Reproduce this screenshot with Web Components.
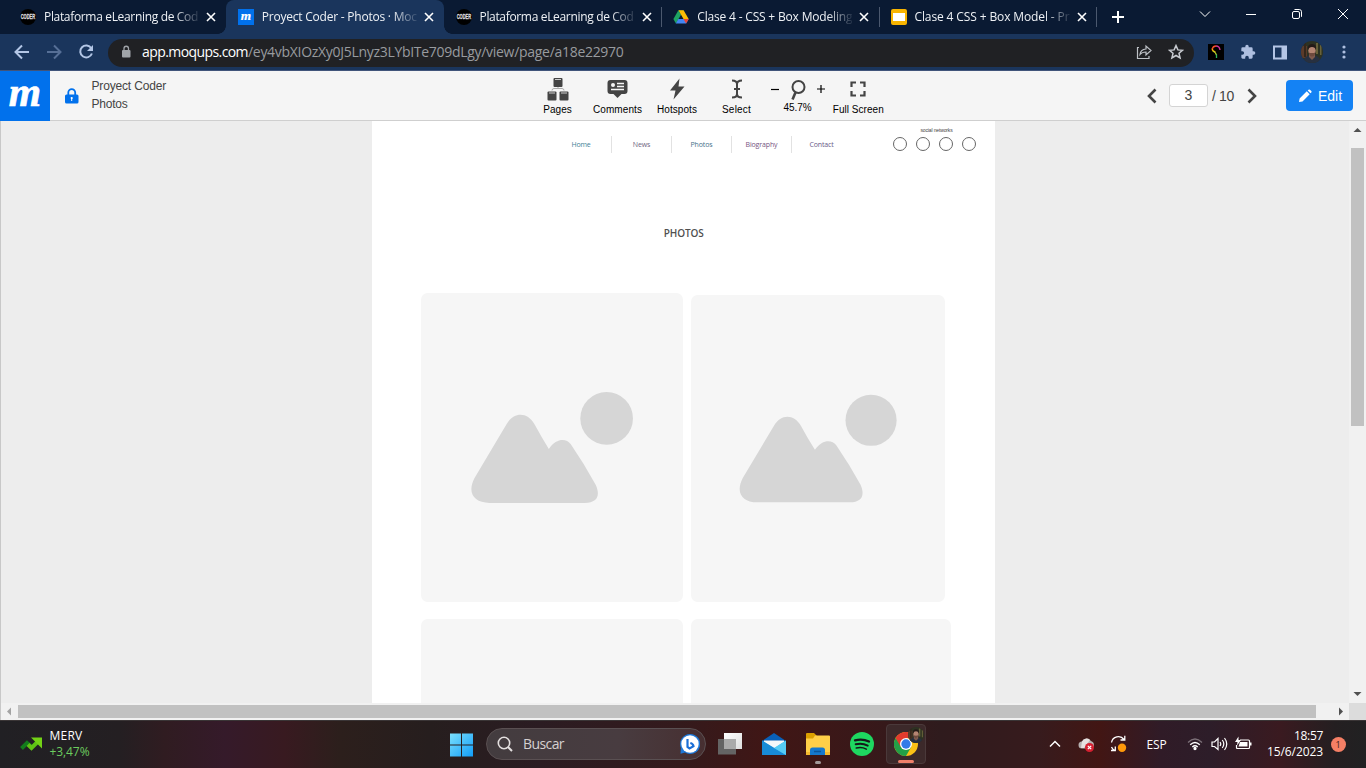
<!DOCTYPE html>
<html lang="es">
<head>
<meta charset="utf-8">
<title>Proyect Coder - Photos · Moqups</title>
<style>
html,body{margin:0;height:100%;overflow:hidden}
body{display:flex;flex-direction:column;height:768px;width:1366px;background:#ededed;font-family:"Open Sans","Noto Sans",sans-serif}
</style>
</head>
<body>
<browser-tabs></browser-tabs>
<browser-bar></browser-bar>
<app-header></app-header>
<scroll-view><mock-page></mock-page></scroll-view>
<task-bar></task-bar>
<script>
const define=(name,html)=>customElements.define(name,class extends HTMLElement{
  constructor(){super();const t=document.createElement('template');
    t.innerHTML=html;
    this.attachShadow({mode:'open'}).append(t.content.cloneNode(true));}
});

/* Label whose tracking is adjusted to occupy the width in its "w" attribute */
customElements.define('ui-label',class extends HTMLElement{
  constructor(){super();this.attachShadow({mode:'open'}).innerHTML=
    '<style>:host{display:inline-block;white-space:pre;flex:none}span{display:inline-block}</style><span><slot></slot></span>';}
  connectedCallback(){
    const w=parseFloat(this.getAttribute('w'));if(!w)return;
    const s=this.shadowRoot.querySelector('span'),n=this.textContent.length;
    s.style.letterSpacing=(w-s.getBoundingClientRect().width)/n+'px';
  }
});

define('m-logo',`<style>:host{display:flex;flex:none;background:#0171ec}svg{width:100%;height:100%;overflow:visible}</style>
<svg viewBox="0 0 50 50"><text x="25" y="35" text-anchor="middle" font-family="Liberation Serif" font-size="41.500" font-weight="bold" font-style="italic" fill="#fff" stroke="#fff" stroke-width=".7">m</text></svg>`);

define('coder-icon',`<style>:host{display:flex;flex:none;width:16px;height:16px}svg{overflow:visible}</style>
<svg width="16" height="16"><circle cx="8" cy="8" r="8" fill="#000"/><text x="0.700" y="10.300" textLength="14.500" lengthAdjust="spacingAndGlyphs" font-family="Liberation Sans" font-weight="bold" font-size="7" fill="#ddd" stroke="#ddd" stroke-width=".3">CODER</text></svg>`);

define('drive-icon',`<style>:host{display:flex;flex:none}</style>
<svg width="16" height="16" viewBox="0 0 16 16"><path d="M5.4 1.2h5.2L8 5.7z" fill="#188038"/><path d="M5.4 1.2 8 5.7 2.9 14.5.4 10z" fill="#1ea362"/><path d="M10.6 1.2 15.7 10h-5.2L5.5 1.3z" fill="#fbbc04"/><path d="M5.3 10h10.4l-2.6 4.5H2.8z" fill="#4285f4"/><path d="M10.5 10h5.2l-2.6 4.5z" fill="#ea4335"/></svg>`);

define('slides-icon',`<style>:host{display:block;flex:none;box-sizing:border-box;width:16px;height:16px;border-radius:2px;background:#fff;border:solid #f8b400;border-width:4px 2px}</style>`);

define('photo-avatar',`<style>:host{display:flex;flex:none;width:22px;height:22px}svg{width:100%;height:100%;border-radius:50%}</style>
<svg viewBox="0 0 22 22"><rect width="22" height="22" fill="#2d3222"/><path d="M0 5h6v12H0z" fill="#5b3b2a"/><path d="M3 2h2v14H3z" fill="#33271c"/><path d="M15 2h2v11h-2zM19 4h1.500v10H19z" fill="#68623a"/><path d="M2 22q1-7 7-8h4q6 1 7 8z" fill="#273040"/><path d="M8 12h6v4l-3 3-3-3z" fill="#7f5a4d"/><ellipse cx="11" cy="9.500" rx="3.700" ry="5" fill="#b58572"/><path d="M7 9q-1-6 4-6t4 6q-1-3-4-3t-4 3z" fill="#241a17"/><path d="M7.700 11.500q3.300 1 6.600 0-.5 4-3.300 4t-3.300-4z" fill="#6e4a3e"/></svg>`);

define('browser-tab',`<style>
:host{display:flex;align-items:center;position:relative;box-sizing:border-box;width:217.75px;height:34px;padding-left:12px;color:#eef1f5;flex:none;font-size:12px}
:host([active]){background:#1a355c;border-radius:8px 8px 0 0}
:host([active])::before,:host([active])::after{content:"";position:absolute;bottom:0;width:8px;height:8px}
:host([active])::before{left:-8px;background:radial-gradient(circle at 0 0,transparent 7.5px,#1a355c 8px)}
:host([active])::after{right:-8px;background:radial-gradient(circle at 100% 0,transparent 7.5px,#1a355c 8px)}
:host([line])::after{content:"";position:absolute;right:-1px;top:7px;width:1px;height:20px;background:#4b586e}
.t{margin-left:8px;width:155px;line-height:18px;-webkit-mask-image:linear-gradient(90deg,#000 84%,rgba(0,0,0,.1) 100%);mask-image:linear-gradient(90deg,#000 84%,rgba(0,0,0,.1) 100%)}
svg{margin-left:7px}</style>
<slot name="icon"></slot><div class="t"><slot></slot></div>
<svg width="10" height="10"><path d="M1 1 9 9M9 1 1 9" stroke="#fff" stroke-width="1.6"/></svg>`);

define('browser-tabs',`<style>
:host{display:flex;height:34px;background:#0a1a33;padding-left:8px;flex:none;position:relative}
m-logo{width:16px;height:16px}
.plus{margin:10px 0 0 15px}.win{margin-left:auto;display:flex;gap:32px;align-items:center;height:28px;padding-right:16px}
</style>
<browser-tab><coder-icon slot="icon"></coder-icon><ui-label w="154">Plataforma eLearning de Cod</ui-label></browser-tab>
<browser-tab active><m-logo slot="icon"></m-logo><ui-label w="155">Proyect Coder - Photos · Moc</ui-label></browser-tab>
<browser-tab line><coder-icon slot="icon"></coder-icon><ui-label w="154">Plataforma eLearning de Cod</ui-label></browser-tab>
<browser-tab line><drive-icon slot="icon"></drive-icon><ui-label w="155">Clase 4 - CSS + Box Modeling</ui-label></browser-tab>
<browser-tab line style="width:216.750px;padding-left:11.500px"><slides-icon slot="icon"></slides-icon><ui-label w="155">Clase 4 CSS + Box Model - Pr</ui-label></browser-tab>
<svg class="plus" width="14" height="14"><path d="M7 1v12M1 7h12" stroke="#fff" stroke-width="2"/></svg>
<div class="win">
<svg width="14" height="14" fill="none" stroke="#fff"><path d="m2 4.5 5 5 5-5"/></svg>
<svg width="14" height="14" fill="none" stroke="#fff"><path d="M2 7.5h10"/></svg>
<svg width="14" height="14" fill="none" stroke="#fff"><rect x="2.5" y="4.5" width="7" height="7" rx="1.5"/><path d="M4.5 2.5h4.7q2.3 0 2.3 2.3v5"/></svg>
<svg width="14" height="14" fill="none" stroke="#fff"><path d="m2 2 10 10M12 2 2 12"/></svg>
</div>`);

define('browser-bar',`<style>
:host{display:flex;align-items:center;box-sizing:border-box;height:37px;background:#1a355c;border-bottom:1px solid #41547a;flex:none;padding:0 17px 0 13px}
svg{display:block;flex:none}
.nav{display:flex;gap:14px;width:95px}
.url{display:flex;align-items:center;width:1086px;flex:none;height:28px;border-radius:14px;background:#202124;font-size:14px;line-height:20px;color:#989b9f;box-sizing:border-box;padding:0 10px 1px 12px;margin-top:1px}
.url b{font-weight:400;color:#fff;margin-left:10px;display:flex}
.act{margin-left:auto;display:flex;gap:15px}
.ext{display:flex;align-items:center;margin-left:14px}
</style>
<div class="nav">
<svg width="18" height="18" viewBox="0 0 18 18" fill="none" stroke="#b3c6e6" stroke-width="2"><path d="M16 9H3M9 2.500 2.500 9 9 15.500"/></svg>
<svg width="18" height="18" viewBox="0 0 18 18" fill="none" stroke="#566f96" stroke-width="2"><path d="M2 9h13M9 2.500 15.500 9 9 15.500"/></svg>
<svg width="18" height="18" viewBox="0 0 18 18" fill="none" stroke="#b3c6e6" stroke-width="2"><path d="M14.300 5.200A6 6 0 1 0 14.900 10.500"/><path d="M16 2v6h-6z" fill="#b3c6e6" stroke="none"/></svg></div>
<div class="url"><svg width="12" height="14" fill="#a0a4a9"><rect x="2" y="5" width="8.500" height="7.500" rx="1"/><path d="M4 5V3.500a2.250 2.250 0 0 1 4.500 0V5" fill="none" stroke="#a0a4a9" stroke-width="1.300"/></svg>
<b><ui-label w="106">app.moqups.com</ui-label></b><ui-label w="375.500">/ey4vbXIOzXy0J5Lnyz3LYbITe709dLgy/view/page/a18e22970</ui-label>
<div class="act"><svg width="17" height="16" fill="none" stroke="#bdc1c6" stroke-width="1.200"><path d="M3 3.500H1.500v11H13V12M4 10.500Q4.500 5.500 10 5V2l5 4.500L10 11V8Q6 8 4 10.500z"/></svg>
<svg width="16" height="16" fill="none" stroke="#c8cbd0" stroke-width="1.500"><path d="m8 1.600 1.900 4.300 4.600.4-3.500 3 1.100 4.700L8 11.500l-4.100 2.500L5 9.300 1.500 6.300l4.600-.4z"/></svg></div></div>
<div class="ext">
<svg width="16" height="16"><rect width="16" height="16" fill="#000"/><g fill="none" stroke-width="1.300"><path d="M7.500 8Q4 7 4.200 4.500" stroke="#ffb300"/><path d="M4.200 5Q5 2 8 2" stroke="#f4502c"/><path d="M8 2q3.500 0 4 4" stroke="#d2349c"/><path d="M4.800 7Q8 8.500 8.500 11" stroke="#b7d12c"/><path d="M8.500 10.500V14" stroke="#2bbb62"/></g></svg>
<svg width="16" height="16" viewBox="0 0 24 24" style="margin-left:16px" fill="#aebfe0"><path d="M20.500 11H19V7a2 2 0 0 0-2-2h-4V3.500a2.500 2.500 0 0 0-5 0V5H4a2 2 0 0 0-2 2v3.800h1.500a2.700 2.700 0 0 1 0 5.400H2V20c0 1.100.9 2 2 2h3.800v-1.500a2.700 2.700 0 0 1 5.400 0V22H17a2 2 0 0 0 2-2v-4h1.500a2.500 2.500 0 0 0 0-5z"/></svg>
<svg width="15" height="15" style="margin-left:17px"><path fill="#b4c5e5" fill-rule="evenodd" d="M0 .500h14v14H0zM2 2.500v10h6.500v-10z"/></svg>
<photo-avatar style="margin-left:13px"></photo-avatar>
<svg width="8" height="16" style="margin-left:17px" fill="#aebfe0"><circle cx="4" cy="3" r="1.600"/><circle cx="4" cy="8" r="1.600"/><circle cx="4" cy="13" r="1.600"/></svg>
</div>`);

define('tool-item',`<style>:host{display:flex;flex-direction:column;align-items:center;font:10px/12px "Liberation Sans",Arial,sans-serif;color:#000}
.i{height:26px;display:flex;align-items:center;margin-bottom:1px}</style><div class="i"><slot name="icon"></slot></div><slot></slot>`);

define('app-header',`<style>
:host{display:flex;align-items:center;box-sizing:border-box;height:50px;background:#f5f5f5;border-bottom:1px solid #cfcfcf;flex:none;font-family:"Liberation Sans",Arial,sans-serif;position:relative;z-index:1}
m-logo{width:50px;height:50px;align-self:flex-start}
.lock{margin:0 12.500px 0 15px}
.names{font-size:12px;line-height:18px;color:#444;width:436px;flex:none;padding-bottom:1px}.names div{height:18px}
.tools{display:grid;grid-template-columns:repeat(6,60px);padding-top:2px;width:360px}
svg{display:block}.z{display:flex;gap:8px;align-items:center}
.pager{display:flex;align-items:center;margin-left:auto;font-size:14px;color:#444}
.box{box-sizing:border-box;width:39px;height:23px;border:1px solid #d4d4d4;border-radius:3px;background:#fff;text-align:center;line-height:21px;margin:0 4px 0 12px}
.edit{display:flex;align-items:center;box-sizing:border-box;width:67px;height:31px;border-radius:4px;background:#1482f4;color:#fff;margin:0 13px 0 29.500px;padding-left:12px;gap:6px;font-size:14px}
</style>
<m-logo></m-logo>
<svg class="lock" width="14" height="16"><rect y="6.500" width="13.500" height="9" rx="1.500" fill="#0171ec"/><path d="M3.300 7V4.500a3.400 3.400 0 0 1 6.900 0V7" fill="none" stroke="#0171ec" stroke-width="1.800"/><circle cx="6.700" cy="10" r="1.100" fill="#fff"/><path d="M6.200 10h1v3h-1z" fill="#fff"/></svg>
<div class="names"><div><ui-label w="74.500">Proyect Coder</ui-label></div><div><ui-label w="36">Photos</ui-label></div></div>
<div class="tools">
<tool-item><svg slot="icon" width="22" height="24" style="margin-top:-2px" fill="#444"><rect x="6.500" y="1" width="9" height="9" rx="1"/><rect x=".5" y="14.500" width="9" height="9" rx="1"/><rect x="12.500" y="14.500" width="9" height="9" rx="1"/><path d="M8 2.500h6M2 16h6M14 16h6" stroke="#ccc"/><path d="M5 13.500q0-2 2-2h8q2 0 2 2M11 10v1.500" fill="none" stroke="#aaa"/></svg><ui-label w="28.500">Pages</ui-label></tool-item>
<tool-item><svg slot="icon" width="22" height="22" style="margin-top:-2px" fill="#444"><path d="M3.500 2h14q3 0 3 3v8q0 3-3 3h-3L10.500 20 6.500 16h-3q-3 0-3-3V5q0-3 3-3z"/><circle cx="6" cy="7" r="2" fill="#f5f5f5"/><path d="M10 5.500h7M10 8.500h7M4 11.500h13" stroke="#f5f5f5" stroke-width="1.300"/></svg><ui-label w="49">Comments</ui-label></tool-item>
<tool-item><svg slot="icon" width="16" height="22" style="margin:-2px 2px 0 0" fill="#444"><path d="M10.500.5 1 12.500h5.500L4.500 21.500 15.500 8.500H9.500z"/></svg><ui-label w="40" style="margin-right:1px">Hotspots</ui-label></tool-item>
<tool-item><svg slot="icon" width="14" height="20" style="margin:-2px 2px 0 0" fill="none" stroke="#444" stroke-width="2"><path d="M2 1.500q5 0 5 3.500v10q0 3.500-5 3.500M12 1.500q-5 0-5 3.500v10q0 3.500 5 3.500M4 10h6"/></svg><ui-label w="29" style="margin-right:2px">Select</ui-label></tool-item>
<tool-item style="margin-top:-1px"><div slot="icon" class="z"><svg width="9" height="8"><path d="M0 4.500h8" stroke="#000" stroke-width="1.200"/></svg><svg width="20" height="22" fill="none" stroke="#444"><circle cx="10.500" cy="9" r="6" stroke-width="2"/><path d="M7.500 14.500 4.500 21.500" stroke-width="2.600"/></svg><svg width="9" height="8"><path d="M1 4h8M5 0v8" stroke="#000" stroke-width="1.200"/></svg></div><ui-label w="28" style="margin-top:-1px">45.7%</ui-label></tool-item>
<tool-item><svg slot="icon" width="16" height="16" style="margin:-2px 0 0 1px" fill="none" stroke="#444" stroke-width="2.200"><path d="M1.500 6V1.500H6M10 1.500h4.500V6M14.500 10v4.500H10M6 14.500H1.500V10"/></svg><ui-label w="51" style="margin-left:1.500px">Full Screen</ui-label></tool-item>
</div>
<div class="pager"><svg width="10" height="16" fill="none" stroke="#444" stroke-width="2.600"><path d="M8.500 1.500 2 8l6.500 6.500"/></svg><div class="box"><span>3</span></div><ui-label w="22">/ 10</ui-label><svg style="margin-left:12.500px" width="10" height="16" fill="none" stroke="#444" stroke-width="2.600"><path d="M1.500 1.500 8 8l-6.500 6.500"/></svg>
<div class="edit"><svg width="14" height="14" fill="#fff"><path d="M1 13l.6-3.500L8.800 2.300l2.900 2.900-7.200 7.200zM9.700 1.500l.8-.8q.7-.6 1.400 0l1.400 1.400q.7.700 0 1.400l-.8.800z"/></svg><ui-label w="24">Edit</ui-label></div></div>`);

define('scroll-view',`<style>
:host{display:grid;grid-template:582px 17px/1349px 17px;flex:none;height:599px;box-sizing:border-box}
.c{background:#ededed;border-left:1px solid #c8c8c8;box-sizing:border-box;overflow:hidden;padding-left:371px}
.v{background:#f1f1f1;display:flex;flex-direction:column;align-items:center;justify-content:space-between}
.vt{width:13px;height:278px;background:#c1c1c1;margin-bottom:251px}
.h{background:#f1f1f1;display:flex;align-items:center;border-left:1px solid #c8c8c8;box-sizing:border-box}
.ht{height:13px;width:1298px;background:#c1c1c1}
.k{background:#dcdcdc}svg{display:block;flex:none}
</style><div class="c"><slot></slot></div>
<div class="v"><svg width="17" height="17"><path d="M4.500 11 8.500 7l4 4z" fill="#505050"/></svg><div class="vt"></div><svg width="17" height="17"><path d="M4.500 6 8.500 10l4-4z" fill="#505050"/></svg></div>
<div class="h"><svg width="17" height="17"><path d="M10 4.500 6 8.500l4 4z" fill="#a3a3a3"/></svg><div class="ht"></div><svg width="17" height="17" style="margin-left:auto"><path d="M7 4.500 11 8.500l-4 4z" fill="#505050"/></svg></div><div class="k"></div>`);

define('photo-card',`<style>:host{display:block;background:#f6f6f6;border-radius:6.500px;flex:none}svg{display:block;width:100%;height:100%}:host([blank]) svg{display:none}</style>
<svg viewBox="35 39 785 926" fill="#d6d6d6"><circle cx="591.500" cy="415.500" r="79"/><path d="M418 507Q395 470 375 433C353 395 313 395 291 433L195 594C172 638 192 669 240 669H526C564 669 573 647 559 615Q525 553 484 493C470 475 441 474 418 507z"/></svg>`);

define('mock-page',`<style>
:host{display:block;width:623px;height:582px;background:#fff;overflow:hidden;box-sizing:border-box}
.top{display:flex;height:47px;padding-left:179px}
nav{display:grid;grid-template-columns:repeat(5,60px);height:16px;margin-top:15px;font-size:7px;line-height:17px;text-align:center}
nav div+div{border-left:1px solid #e2e2e2}
.soc{margin:6px 0 0 41px;width:84px;display:flex;flex-direction:column;align-items:center;font:5px/6px "Liberation Sans",sans-serif;color:#444}
.dots{display:flex;gap:9px;margin-top:4px}.dots i{box-sizing:border-box;width:14px;height:14px;border:1px solid #666;border-radius:50%}
h1{margin:58px 0 0;text-align:center;font-size:10px;line-height:14px;font-weight:600;color:#505050;height:14px;padding-left:.5px}
.row{display:flex;gap:8px;align-items:flex-end;margin:53px 0 0 49.400px}
.row+.row{margin-top:17px;align-items:flex-start}
</style>
<div class="top"><nav><div><ui-label w="19" style="color:#3f7f97">Home</ui-label></div><div><ui-label w="17.500" style="color:#6f6480">News</ui-label></div><div><ui-label w="22" style="color:#45718a">Photos</ui-label></div><div><ui-label w="32" style="color:#76547f">Biography</ui-label></div><div><ui-label w="24" style="color:#695a87">Contact</ui-label></div></nav>
<div class="soc"><ui-label w="32" style="margin-left:5px">social networks</ui-label><div class="dots"><i></i><i></i><i></i><i></i></div></div></div>
<h1><ui-label w="40">PHOTOS</ui-label></h1>
<div class="row"><photo-card style="width:262px;height:308.500px"></photo-card><photo-card style="width:254px;height:306.500px"></photo-card></div>
<div class="row"><photo-card blank style="width:262px;height:308px"></photo-card><photo-card blank style="width:260px;height:308px"></photo-card></div>`);

define('task-bar',`<style>
:host{display:flex;align-items:center;box-sizing:border-box;height:48px;flex:none;border-top:1px solid #3a3536;color:#fff;font-size:12px;
background:linear-gradient(90deg,#212024 0,#241f22 120px,#301c21 165px,#351a2a 225px,#381a20 285px,#2c1f1c 340px,#261e1e 430px,#2b1c22 540px,#341a1c 680px,#401615 770px,#391819 860px,#2f1b1d 940px,#371b1d 1040px,#421614 1100px,#301b27 1160px,#2d1d29 1210px,#3a1a20 1280px,#241f21 1335px,#212122 1366px)}
svg{display:block;flex:none}
.w{display:flex;align-items:center;gap:7.500px;padding:0 0 1px 20px;width:430px;box-sizing:border-box;line-height:16px}.w div div{height:16px}
.up{color:#6ccb5f}
.s{display:flex;align-items:center;box-sizing:border-box;width:220px;height:32px;border-radius:16px;border:1px solid #5a5052;background:linear-gradient(90deg,#433c3f,#483c40 60%,#472f31);margin:-1px 12px 0 12px;padding:0 5px 1px 10px;color:#d5d0d1;font-size:14px;line-height:20px}
.s ui-label{margin-left:10px}.s svg:last-child{margin-left:auto}
.apps{display:flex;gap:20px;align-items:center}.app{position:relative}
.app.r::after{content:"";position:absolute;left:9px;bottom:-7px;width:6px;height:3px;border-radius:2px;background:#a39a9a}
.chrome{display:flex;align-items:center;justify-content:center;position:relative;width:40px;height:40px;box-sizing:border-box;border:1px solid #4a393a;border-radius:4px;background:#3c292a;margin-left:12px;margin-top:-1px}
.chrome photo-avatar{position:absolute;right:1px;top:2px;width:16px;height:16px}
.chrome::after{content:"";position:absolute;left:11px;bottom:0;width:16px;height:3px;border-radius:2px;background:#f0806a}
.tray{margin-left:auto;display:flex;align-items:center;padding:0 20.500px 1px 0}
.clock{text-align:right;line-height:16px;width:58px;margin-left:13.500px}.clock div{height:16px;display:flex;justify-content:flex-end}
.n{width:15px;height:15px;border-radius:50%;background:#f57f65;color:#3b1a18;font-size:9px;line-height:15px;text-align:center;margin-left:7.500px}
</style>
<div class="w"><svg width="22" height="16"><path d="M1.500 12.500 7 7l4 3.500" fill="none" stroke="#137c1c" stroke-width="4"/><path d="M8 8.500 11.500 12 19 4.500" fill="none" stroke="#5fc315" stroke-width="4"/><path d="M11 1.500h11v11z" fill="#73d216"/></svg><div><div><ui-label w="33">MERV</ui-label></div><div class="up"><ui-label w="40">+3,47%</ui-label></div></div></div>
<svg width="24" height="24" style="margin-left:19px;margin-right:1px"><defs><linearGradient id="g" x2="1" y2="1" gradientUnits="userSpaceOnUse" gradientTransform="scale(24)"><stop stop-color="#7fe2fc"/><stop offset="1" stop-color="#109cf8"/></linearGradient></defs><path d="M1 .5h11v11H1zM13 .5h11v11H13zM1 12.500h11v11H1zM13 12.500h11v11H13z" fill="url(#g)"/></svg>
<div class="s"><svg width="16" height="16" fill="none" stroke="#e4e0e0"><circle cx="7" cy="7" r="5.700" stroke-width="1.600"/><path d="m11 11 4 4" stroke-width="2"/></svg><ui-label w="41">Buscar</ui-label>
<svg width="20" height="20"><path d="M10 0a10 10 0 1 1-5 18.500L.5 19.700.9 14A10 10 0 0 1 10 0z" fill="#1e78d8"/><circle cx="10" cy="10" r="8.700" fill="#fff"/><path d="M7.500 5v8l2 1.500 4-2.300q-.5-2.500-3.200-3.200" fill="none" stroke="#1b6fd6" stroke-width="2.200"/></svg></div>
<div class="apps">
<svg width="24" height="24"><defs><linearGradient id="a" y2="1" x2="1"><stop stop-color="#fff"/><stop offset="1" stop-color="#ddd"/></linearGradient></defs><path d="M6 0h18v16H6z" fill="url(#a)"/><path d="M0 6h18v15.500H0z" fill="#646464"/><path d="M6 6h12v10H6z" fill="#aaa"/></svg>
<svg width="24" height="24"><path d="M0 8 12 0 24 8v3H0z" fill="#0960b8"/><path d="M2 7.500h20v8H2z" fill="#f5f7fa"/><path d="M0 7.500l12 8 12-8V22H0z" fill="#35b5ee"/><path d="M0 7.500 24 22H0z" fill="#188bd8"/><path d="M12 15 24 22V7.500z" fill="#55cbf5"/></svg>
<div class="app r"><svg width="24" height="24"><path d="M0 1q0-1 1-1h7l2.500 2.500V7H0z" fill="#dca000"/><path d="M9 2.500h14q1 0 1 1V22H0V5.500h7z" fill="#ffcf48"/><path d="M0 19h24v3H0z" fill="#f3b92f"/><path d="M4 22v-5q0-2.500 2.500-2.500h10Q19 14.500 19 17v5z" fill="#1478cd"/><path d="M8 18.500h7" stroke="#0a559b" stroke-width="1.500"/></svg></div>
<svg width="24" height="24" style="margin-top:-1px"><circle cx="12" cy="12" r="12" fill="#1ed760"/><g fill="none" stroke="#15171a" stroke-linecap="round"><path d="M5 8.300q7.500-2 14 1.200" stroke-width="2.300"/><path d="M5.700 12.300q6.500-1.600 12 1.300" stroke-width="2"/><path d="M6.300 16q5.500-1.300 10 1.100" stroke-width="1.600"/></g></svg></div>
<div class="chrome"><svg width="24" height="24" viewBox="0 0 24 24"><circle cx="12" cy="12" r="12" fill="#fbc116"/><path d="M1.600 6A12 12 0 0 0 12 24l5.200-9L12 12H6.800z" fill="#23a047"/><path d="M1.600 6A12 12 0 0 1 22.400 6H12v6l-5.200 3z" fill="#e33b2e"/><circle cx="12" cy="12" r="6" fill="#fff"/><circle cx="12" cy="12" r="4.700" fill="#327be8"/></svg><photo-avatar></photo-avatar></div>
<div class="tray">
<svg width="12" height="8" fill="none" stroke="#fff" stroke-width="1.500"><path d="m1 6.500 5-5 5 5"/></svg>
<svg width="18" height="16" style="margin:1px 0 0 17px"><path d="M4 11.500a3.500 3.500 0 0 1 0-7A5 5 0 0 1 13 4q3 1 3 4t-3 3.500z" fill="#b6b0b0"/><path d="M4 4.500A5 5 0 0 1 12 3L6 11H3z" fill="#e6e1e1"/><circle cx="11.500" cy="10.500" r="4.500" fill="#d51f30"/><path d="m9.800 8.800 3.400 3.400m0-3.400-3.400 3.400" stroke="#fff" stroke-width="1.200"/></svg>
<svg width="17" height="18" style="margin-left:14px" fill="none" stroke="#fff" stroke-width="1.300"><path d="M1.500 7.500A7 7 0 0 1 14 4.500M14.800.8v4.200h-4.300M1 15.500h4.300v-4M1.500 12q1 2.500 3.500 3.500"/><circle cx="12" cy="12.700" r="4.200" fill="#ff990a" stroke="none"/></svg>
<ui-label w="20" style="margin-left:20px">ESP</ui-label>
<svg width="16" height="14" style="margin-left:20px" fill="none" stroke="#fff" stroke-width="1.300"><path d="M1 5.500Q8-1.500 15 5.500" stroke="#7c7078"/><path d="M3.200 7.800q4.800-4.600 9.600 0M5.300 10q2.700-2.500 5.400 0"/><circle cx="8" cy="11.500" r="1" fill="#fff"/></svg>
<svg width="17" height="14" style="margin-left:8px" fill="none" stroke="#fff" stroke-width="1.200"><path d="M1 5h2.500L7 1.500v11L3.500 9.500H1zM9 5q1.500 2 0 4M11.300 3q3 4 0 8M13.500 1q4.500 6 0 12"/></svg>
<svg width="17" height="15" style="margin:-2px 0 0 7px"><path d="M5 4h8.500q1 0 1 1v6.500q0 1-1 1H2.500q-1 0-1-1V9" fill="none" stroke="#fff" stroke-width="1.200"/><path d="M5 6h7.500v4.500h-9zM15 6.500h1.500v3H15zM3.500.5 0 6h2.500L2 9.500 6 4H3.500z" fill="#fff"/></svg>
<div class="clock"><div><ui-label w="29">18:57</ui-label></div><div><ui-label w="56">15/6/2023</ui-label></div></div><div class="n"><span>1</span></div></div>`);
</script>
</body>
</html>
